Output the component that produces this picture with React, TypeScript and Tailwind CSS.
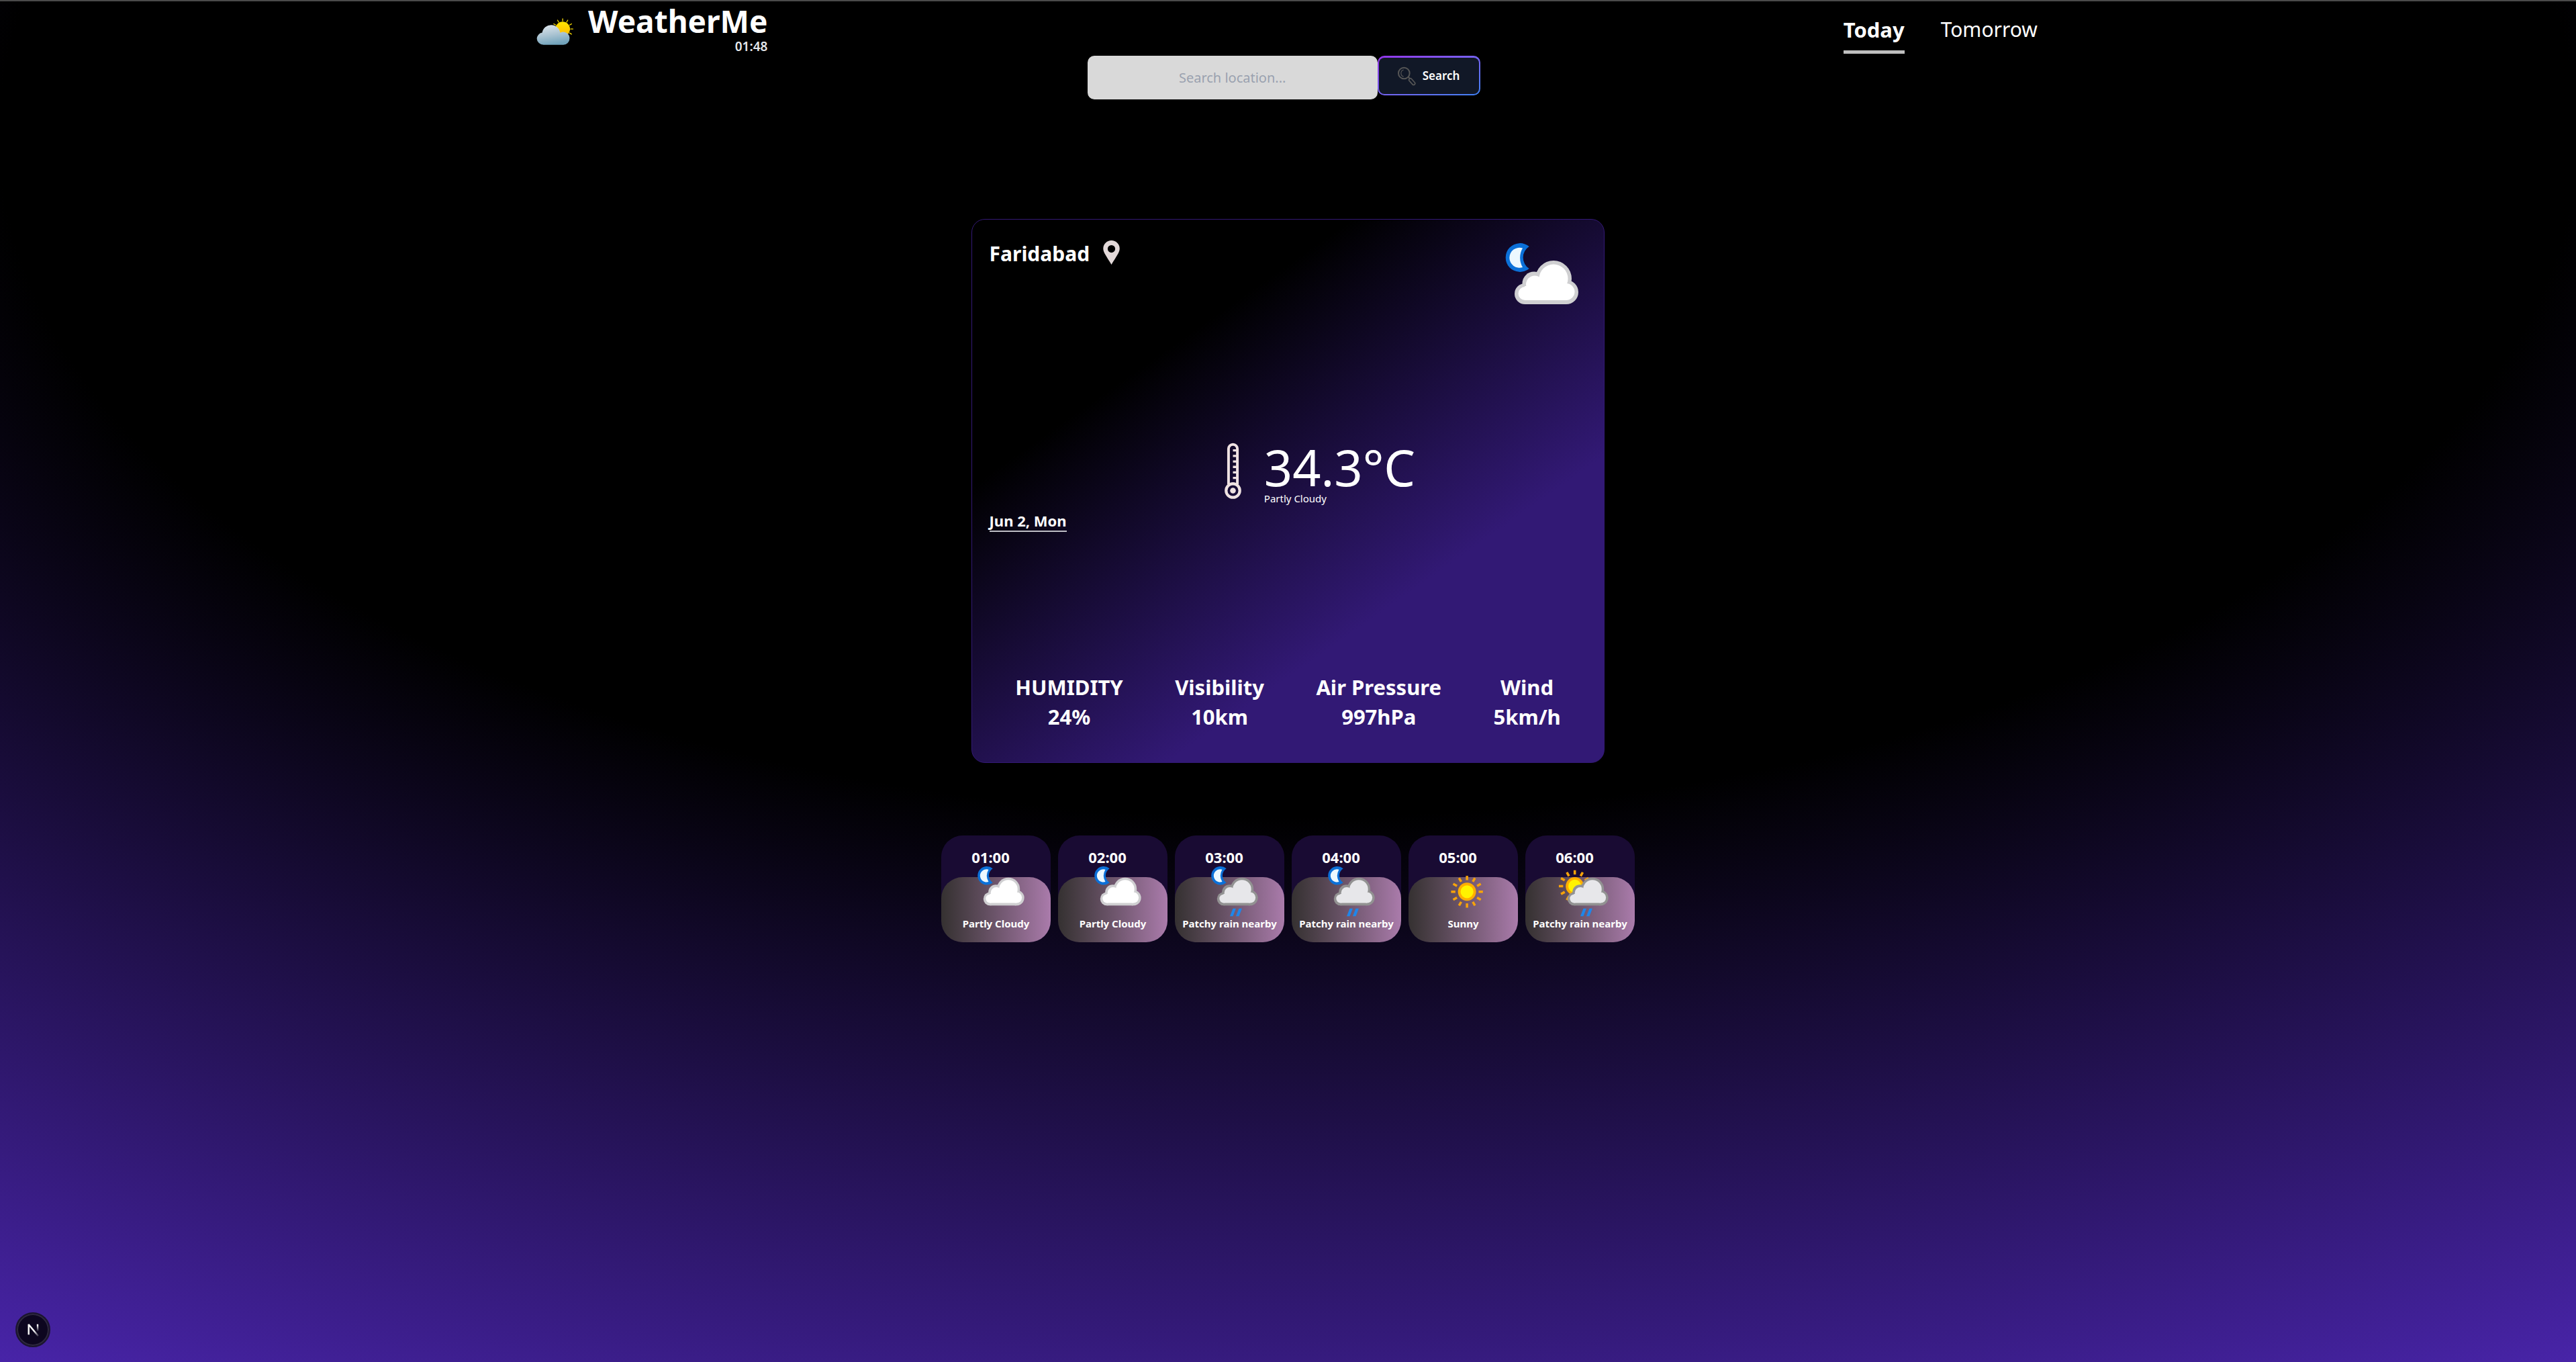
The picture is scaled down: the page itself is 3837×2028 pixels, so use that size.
type Sky = "night-cloud" | "night-rain" | "sunny" | "day-rain";

const stats = [
  { label: "HUMIDITY", value: "24%" },
  { label: "Visibility", value: "10km" },
  { label: "Air Pressure", value: "997hPa" },
  { label: "Wind", value: "5km/h" },
];

const hours: { time: string; label: string; sky: Sky }[] = [
  { time: "01:00", label: "Partly Cloudy", sky: "night-cloud" },
  { time: "02:00", label: "Partly Cloudy", sky: "night-cloud" },
  { time: "03:00", label: "Patchy rain nearby", sky: "night-rain" },
  { time: "04:00", label: "Patchy rain nearby", sky: "night-rain" },
  { time: "05:00", label: "Sunny", sky: "sunny" },
  { time: "06:00", label: "Patchy rain nearby", sky: "day-rain" },
];

const rayAngles = [0, 30, 60, 90, 120, 150, 180, 210, 240, 270, 300, 330];

function Sun({ cx, cy }: { cx: number; cy: number }) {
  return (
    <g>
      {rayAngles.map((a) => (
        <line
          key={a}
          x1={cx}
          y1={cy - 27}
          x2={cx}
          y2={cy - 37}
          stroke="#f7a30a"
          strokeWidth="5.5"
          transform={`rotate(${a} ${cx} ${cy})`}
        />
      ))}
      <circle cx={cx} cy={cy} r="21" fill="#ffae00" />
      <circle cx={cx} cy={cy} r="15" fill="#fff200" />
    </g>
  );
}

function Moon() {
  return (
    <g>
      <path d="M34.7 5A21.4 21.4 0 1 0 34.7 38A19.6 19.6 0 0 1 34.7 5Z" fill="#0b70d8" />
      <path d="M25 7.5A15 15 0 1 0 25 36A28 28 0 0 1 25 7.5Z" fill="#ecf8ff" />
    </g>
  );
}

function Cloud({ edge, fill }: { edge: string; fill: string }) {
  return (
    <g>
      <g fill={edge}>
        <circle cx="28.5" cy="75.5" r="15.5" />
        <circle cx="42" cy="60" r="17.5" />
        <circle cx="71" cy="53" r="27" />
        <circle cx="90" cy="73" r="18" />
        <rect x="28" y="60" width="62" height="31" />
      </g>
      <g fill={fill}>
        <circle cx="28.5" cy="75" r="10" />
        <circle cx="43" cy="61.5" r="13" />
        <circle cx="71" cy="53" r="21.5" />
        <circle cx="90" cy="72.5" r="12.5" />
        <rect x="28" y="64" width="62" height="21" />
      </g>
    </g>
  );
}

function SkyIcon({ sky, className }: { sky: Sky; className: string }) {
  const rain = sky === "night-rain" || sky === "day-rain";
  return (
    <svg viewBox="-22 0 130 117" className={className} aria-hidden="true">
      {(sky === "night-cloud" || sky === "night-rain") && <Moon />}
      {sky === "sunny" && <Sun cx={51} cy={59} />}
      {sky === "day-rain" && <Sun cx={30} cy={46} />}
      {sky === "night-cloud" && <Cloud edge="#cfcfd1" fill="#ffffff" />}
      {rain && <Cloud edge="#929292" fill="#e7e7ea" />}
      {rain && (
        <g fill="#1f86ea">
          <path d="M50 98H57L50 116H43Z" />
          <path d="M64 98H71L64 116H57Z" />
        </g>
      )}
    </svg>
  );
}

function LogoIcon() {
  return (
    <svg viewBox="55 50 175 125" className="mt-5 h-[42px] w-[58px]" aria-hidden="true">
      <defs>
        <linearGradient id="logo-cloud" gradientUnits="userSpaceOnUse" x1="110" y1="80" x2="125" y2="172">
          <stop offset="0" stopColor="#dde5ec" />
          <stop offset="0.5" stopColor="#adc5d3" />
          <stop offset="1" stopColor="#71a3bb" />
        </linearGradient>
        <linearGradient id="logo-sun" x1="0" y1="0" x2="0" y2="1">
          <stop offset="0" stopColor="#ffe500" />
          <stop offset="1" stopColor="#ffb800" />
        </linearGradient>
      </defs>
      {rayAngles.map((a) => (
        <line
          key={a}
          x1="176"
          y1="65"
          x2="176"
          y2="55"
          stroke="#f2d500"
          strokeWidth="4"
          strokeLinecap="round"
          transform={`rotate(${a} 176 101)`}
        />
      ))}
      <circle cx="176" cy="101" r="33" fill="url(#logo-sun)" />
      <path
        d="M60 145A29 29 0 0 1 84 117A41 41 0 0 1 165 118A28 28 0 0 1 207 144A28 28 0 0 1 179 172H90A30 28 0 0 1 60 145Z"
        fill="url(#logo-cloud)"
      />
    </svg>
  );
}

function MagnifierIcon() {
  return (
    <svg
      viewBox="150 54 87 87"
      className="h-[29px] w-[29px]"
      fill="none"
      stroke="#565656"
      strokeLinecap="round"
      aria-hidden="true"
    >
      <circle cx="181" cy="84" r="25" strokeWidth="6" />
      <path d="M178 99A16 16 0 0 1 178 69" strokeWidth="3.5" />
      <path d="M201 102L206 107" strokeWidth="6" />
      <rect x="-16" y="-6.5" width="34" height="13" rx="6.5" strokeWidth="5" transform="translate(216 121) rotate(48)" />
    </svg>
  );
}

function PinIcon() {
  return (
    <svg viewBox="0 0 74 109" className="h-9 w-[25px]" aria-hidden="true">
      <path
        fillRule="evenodd"
        fill="#e3d9d9"
        d="M37 0A37 37 0 0 1 74 38C74 54 58 74 37 109C16 74 0 54 0 38A37 37 0 0 1 37 0ZM37 21A17 17 0 1 0 37 55A17 17 0 1 0 37 21Z"
      />
    </svg>
  );
}

function ThermometerIcon() {
  return (
    <svg viewBox="0 0 76 254" className="h-[85px] w-[25px]" fill="none" stroke="#efe2e2" aria-hidden="true">
      <path d="M18 186V26A20 20 0 0 1 58 26V186" strokeWidth="12" />
      <path d="M38 33H56M38 58H56M38 83H56M38 108H56M38 133H56M38 158H56" strokeWidth="10" />
      <circle cx="38" cy="215" r="31" strokeWidth="13" />
      <circle cx="38" cy="215" r="13" fill="#efe2e2" stroke="none" />
    </svg>
  );
}

function NextBadge() {
  return (
    <button
      type="button"
      aria-label="Open developer tools"
      className="fixed bottom-[22px] left-[23px] flex h-[52px] w-[52px] items-center justify-center rounded-full border-2 border-[#1c1630] bg-[#0d0620] ring-2 ring-[#2f2940] ring-inset"
    >
      <svg viewBox="0 0 50 56" className="h-[19px] w-[17px]" fill="none" strokeWidth="7" aria-hidden="true">
        <defs>
          <linearGradient id="badge-stem" gradientUnits="userSpaceOnUse" x1="0" y1="0" x2="0" y2="34">
            <stop offset="0.2" stopColor="#fff" />
            <stop offset="1" stopColor="#fff" stopOpacity="0" />
          </linearGradient>
          <linearGradient id="badge-bar" gradientUnits="userSpaceOnUse" x1="28" y1="32" x2="48" y2="56">
            <stop offset="0" stopColor="#fff" />
            <stop offset="1" stopColor="#fff" stopOpacity="0.1" />
          </linearGradient>
        </defs>
        <path d="M5 48V2" stroke="#fff" />
        <path d="M5 4L47 54" stroke="url(#badge-bar)" />
        <path d="M44 2L45 34" stroke="url(#badge-stem)" />
      </svg>
    </button>
  );
}

export default function App() {
  return (
    <div className="min-h-screen border-t-2 border-[#4a4a4a] bg-[radial-gradient(125%_125%_at_50%_10%,#000_40%,#63e_100%)] bg-origin-border font-['Noto_Sans','Open_Sans',sans-serif] text-white">
      <header className="mx-auto flex w-[58.4%] items-start justify-between pt-1">
        <div className="flex items-start gap-5">
          <LogoIcon />
          <div className="text-right">
            <h1 className="text-[46px] leading-[50px] font-bold">WeatherMe</h1>
            <time className="block text-[19px] leading-[27px] font-semibold text-gray-200">01:48</time>
          </div>
        </div>
        <nav className="mt-[18px] flex gap-[54px] pr-1 text-[30px] leading-10">
          <a href="#today" aria-current="page" className="border-b-5 border-[#bfbfbf] pb-[11px] text-[31px] font-bold">
            Today
          </a>
          <a href="#tomorrow">Tomorrow</a>
        </nav>
      </header>

      <main>
        <form className="flex items-start justify-center pr-3" onSubmit={(e) => e.preventDefault()}>
          <input
            type="text"
            aria-label="Search location"
            placeholder="Search location..."
            className="h-[65px] w-[432px] rounded-[10px] bg-[#d9d9d9] px-4 text-center text-[20px] text-gray-900 placeholder:text-gray-400"
          />
          <button
            type="submit"
            className="rounded-[10px] bg-linear-to-br from-[#9333ea] to-[#3b82f6] p-[2px] pt-[3px] text-[17px] font-semibold"
          >
            <span className="flex h-[54px] items-center gap-[9px] rounded-lg bg-[#111827] pr-[29px] pl-[27px]">
              <MagnifierIcon />
              Search
            </span>
          </button>
        </form>

        <section className="mx-auto mt-[178px] w-[24.6%] min-w-[800px] rounded-[20px] border border-[#331975] bg-[linear-gradient(145deg,#000_27%,#321975_69%)] px-[26px] pt-[31px] pb-[46px]">
          <div className="flex items-start justify-between">
            <div className="flex items-start gap-5">
              <h2 className="text-[30px] leading-10 font-bold">Faridabad</h2>
              <PinIcon />
            </div>
            <SkyIcon sky="night-cloud" className="mt-1 mr-3 h-[117px] w-[130px]" />
          </div>

          <div className="mt-[180px] flex items-start justify-center gap-[34px] pl-[95px]">
            <ThermometerIcon />
            <div>
              <p className="text-[74px] leading-[73px]">34.3°C</p>
              <p className="text-[15px] leading-5">Partly Cloudy</p>
            </div>
          </div>
          <div className="mt-2 flex">
            <time className="border-b-2 border-[#bfbfc6] text-[22px] leading-[30px] font-bold">Jun 2, Mon</time>
          </div>

          <dl className="mt-[209px] flex justify-around text-center text-[31px] leading-[44px] font-bold">
            {stats.map((s) => (
              <div key={s.label}>
                <dt>{s.label}</dt>
                <dd>{s.value}</dd>
              </div>
            ))}
          </dl>
        </section>

        <ul className="mt-[108px] flex justify-center gap-[11px]">
          {hours.map((h) => (
            <li
              key={h.time}
              className="relative isolate flex w-[163px] flex-col items-center rounded-[32px] bg-[#190b33] pt-[19px] pb-[18px] font-bold"
            >
              <div className="absolute inset-x-0 bottom-0 -z-10 h-[97px] rounded-[32px] bg-linear-to-r from-[#353131] to-[#aa7bab]" />
              <time className="pr-4 text-[22px] leading-[27px]">{h.time}</time>
              <SkyIcon sky={h.sky} className="h-[75px] w-[84px]" />
              <p className="text-[15px] leading-5 whitespace-nowrap">{h.label}</p>
            </li>
          ))}
        </ul>
      </main>

      <NextBadge />
    </div>
  );
}
